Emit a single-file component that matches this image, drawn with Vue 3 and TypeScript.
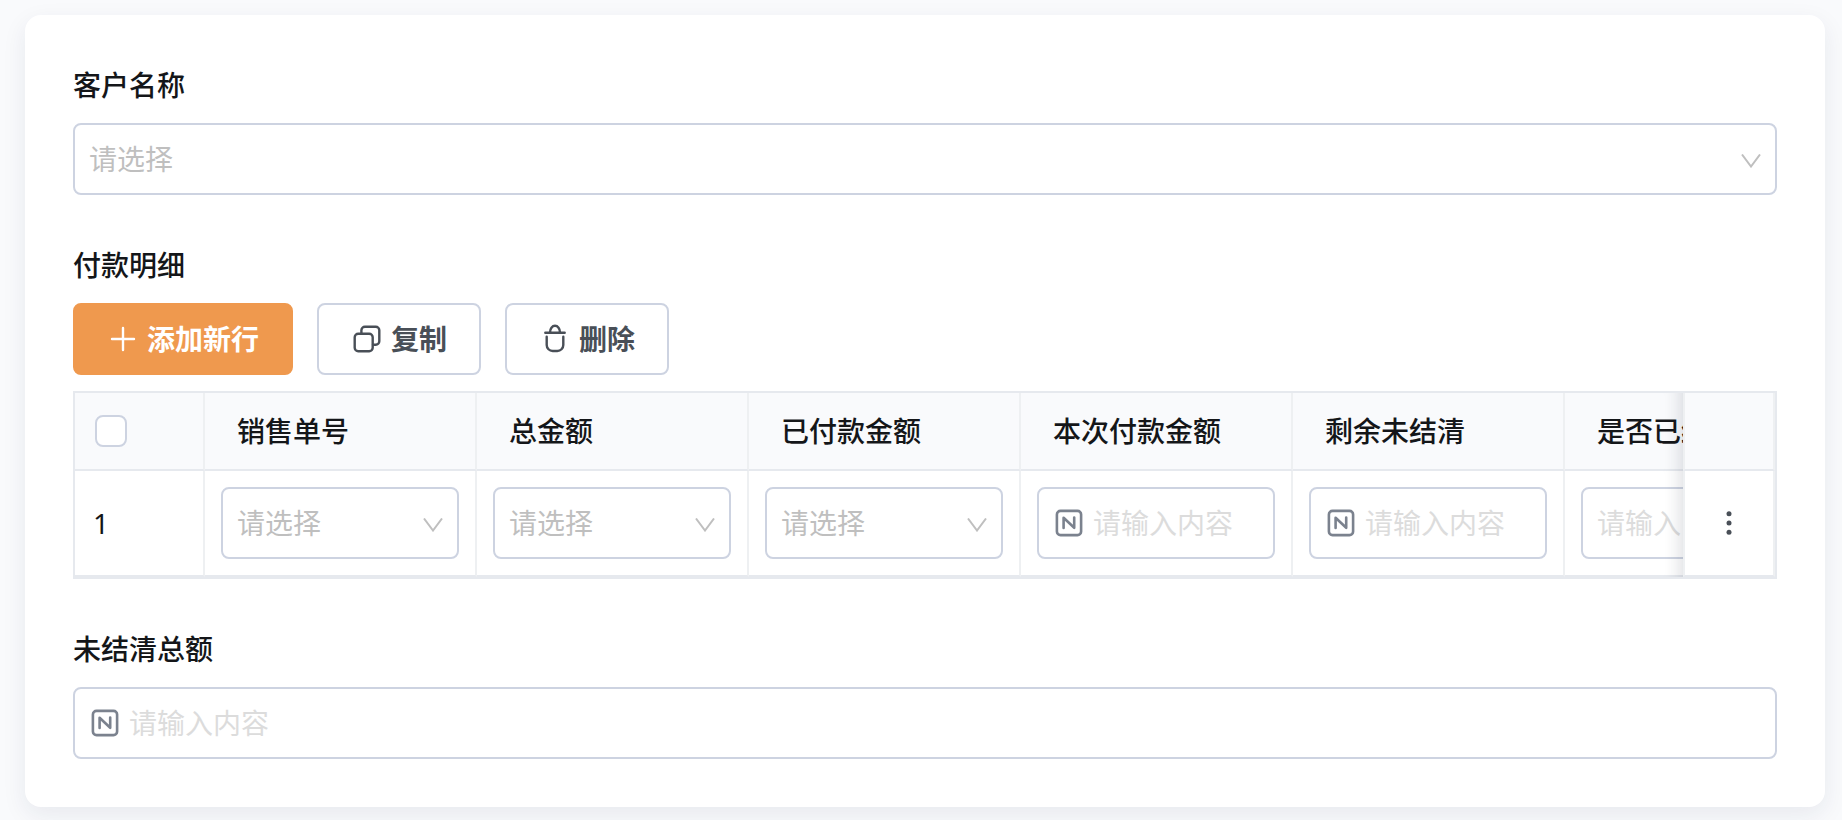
<script setup lang="ts">
import { ref } from 'vue'

type CellKind = 'select' | 'number' | 'text'

interface Column {
  key: string
  title: string
  kind: CellKind
}

const columns: Column[] = [
  { key: 'orderNo', title: '销售单号', kind: 'select' },
  { key: 'total', title: '总金额', kind: 'select' },
  { key: 'paid', title: '已付款金额', kind: 'select' },
  { key: 'current', title: '本次付款金额', kind: 'number' },
  { key: 'rest', title: '剩余未结清', kind: 'number' },
  { key: 'settled', title: '是否已结清', kind: 'text' },
]

const createRow = (): Record<string, string> =>
  Object.fromEntries(columns.map((c) => [c.key, '']))

const customer = ref('')
const outstanding = ref('')
const allChecked = ref(false)
const rows = ref<Record<string, string>[]>([createRow()])

function addRow() {
  rows.value.push(createRow())
}

function copyRow() {
  const last = rows.value[rows.value.length - 1]
  if (last) rows.value.push({ ...last })
}

function removeRow() {
  rows.value.pop()
}
</script>

<template>
  <main class="page">
    <form class="card" @submit.prevent>
      <div class="field">
        <label class="label" for="customer">客户名称</label>
        <div class="control">
          <select id="customer" v-model="customer" class="entry placeholder">
            <option value="" disabled>请选择</option>
          </select>
          <svg class="chevron" viewBox="0 0 20 14" aria-hidden="true">
            <path d="M1 0.5 10 12.5 19 0.5" />
          </svg>
        </div>
      </div>

      <section class="field" aria-labelledby="detail-title">
        <h2 id="detail-title" class="label">付款明细</h2>
        <div class="toolbar">
          <button type="button" class="btn primary" @click="addRow">
            <svg class="icon" viewBox="0 0 32 32" aria-hidden="true">
              <path d="M16 5V27M5 16H27" />
            </svg>
            <span>添加新行</span>
          </button>
          <button type="button" class="btn" @click="copyRow">
            <svg class="icon" viewBox="0 0 32 32" aria-hidden="true">
              <rect x="3.7" y="10.7" width="18" height="17.6" rx="3.5" />
              <path d="M10.4 10.3V7.2A3.5 3.5 0 0 1 13.9 3.7H24.8A3.5 3.5 0 0 1 28.3 7.2V18.2A3.5 3.5 0 0 1 24.8 21.7H22" />
            </svg>
            <span>复制</span>
          </button>
          <button type="button" class="btn" @click="removeRow">
            <svg class="icon" viewBox="0 0 32 32" aria-hidden="true">
              <path d="M6.3 9.8H25.7M11 9.4A5 6.6 0 0 1 21 9.4M7.7 13.8V22A6 6 0 0 0 13.7 28H18.3A6 6 0 0 0 24.3 22V13.8" />
            </svg>
            <span>删除</span>
          </button>
        </div>

        <div class="table-wrap">
          <table class="table">
            <colgroup>
              <col class="col-index" />
              <col v-for="c in columns" :key="c.key" class="col-data" />
              <col class="col-action" />
            </colgroup>
            <thead>
              <tr>
                <th class="index">
                  <input v-model="allChecked" type="checkbox" class="check" aria-label="全选" />
                </th>
                <th v-for="c in columns" :key="c.key" scope="col">{{ c.title }}</th>
                <td class="action"></td>
              </tr>
            </thead>
            <tbody>
              <tr v-for="(row, i) in rows" :key="i">
                <td class="index">{{ i + 1 }}</td>
                <td v-for="c in columns" :key="c.key">
                  <div class="control">
                    <template v-if="c.kind === 'select'">
                      <select v-model="row[c.key]" class="entry placeholder" :aria-label="c.title">
                        <option value="" disabled>请选择</option>
                      </select>
                      <svg class="chevron" viewBox="0 0 20 14" aria-hidden="true">
                        <path d="M1 0.5 10 12.5 19 0.5" />
                      </svg>
                    </template>
                    <template v-else>
                      <svg v-if="c.kind === 'number'" class="num-icon" viewBox="0 0 32 32" aria-hidden="true">
                        <rect x="3.9" y="3.9" width="24.2" height="24.2" rx="3.6" />
                        <path d="M10.6 21V10.8L21.2 20.8V10.6" />
                      </svg>
                      <input v-model="row[c.key]" type="text" class="entry" placeholder="请输入内容" :aria-label="c.title" />
                    </template>
                  </div>
                </td>
                <td class="action">
                  <button type="button" class="more" aria-label="更多">
                    <svg viewBox="0 0 32 32" aria-hidden="true">
                      <circle cx="16" cy="6.7" r="2.5" />
                      <circle cx="16" cy="16" r="2.5" />
                      <circle cx="16" cy="25.3" r="2.5" />
                    </svg>
                  </button>
                </td>
              </tr>
            </tbody>
          </table>
        </div>
      </section>

      <div class="field">
        <label class="label" for="outstanding">未结清总额</label>
        <div class="control">
          <svg class="num-icon" viewBox="0 0 32 32" aria-hidden="true">
            <rect x="3.9" y="3.9" width="24.2" height="24.2" rx="3.6" />
            <path d="M10.6 21V10.8L21.2 20.8V10.6" />
          </svg>
          <input id="outstanding" v-model="outstanding" type="text" class="entry" placeholder="请输入内容" />
        </div>
      </div>
    </form>
  </main>
</template>

<style>
body {
  background: #f9fafc;
}
</style>

<style scoped>
.page {
  box-sizing: border-box;
  min-height: 100vh;
  padding: 15px 17px 13px 25px;
  overflow: hidden;
  background: #f9fafc;
  color: #141619;
  font: 400 28px/44px "Noto Sans", "Noto Sans CJK SC", sans-serif;
}

.card {
  display: flex;
  flex-direction: column;
  gap: 48px;
  padding: 48px;
  border-radius: 16px;
  background: #fff;
  box-shadow: 0 8px 24px rgba(31, 35, 80, 0.08);
}

.field {
  display: flex;
  flex-direction: column;
  gap: 16px;
  min-width: 0;
}

.label {
  margin: 0;
  font-size: 28px;
  font-weight: 500;
  line-height: 44px;
}

.control {
  display: flex;
  align-items: center;
  gap: 8px;
  box-sizing: border-box;
  height: 72px;
  padding: 0 14px;
  border: 2px solid #cdd3e1;
  border-radius: 8px;
  background: #fff;
}

.entry {
  flex: 1;
  min-width: 0;
  width: 100%;
  height: 100%;
  margin: 0;
  padding: 0;
  border: 0;
  outline: 0;
  appearance: none;
  background: transparent;
  color: inherit;
  font: inherit;
}

.entry.placeholder {
  color: #bfbfbf;
}

.entry::placeholder {
  color: #dcdcdc;
  opacity: 1;
}

.chevron {
  flex: none;
  width: 20px;
  height: 14px;
  margin-top: 3px;
  fill: none;
  stroke: #bfbfbf;
  stroke-width: 2;
}

.num-icon {
  flex: none;
  width: 32px;
  height: 32px;
  fill: none;
  stroke: #7b828e;
  stroke-width: 2.6;
  stroke-linecap: round;
  stroke-linejoin: round;
}

.toolbar {
  display: flex;
  gap: 24px;
}

.btn {
  display: flex;
  align-items: center;
  gap: 8px;
  box-sizing: border-box;
  height: 72px;
  padding: 0 32px;
  border: 2px solid #cdd3e1;
  border-radius: 8px;
  background: #fff;
  color: #494f57;
  font: inherit;
  font-weight: 700;
  cursor: pointer;
}

.btn.primary {
  border-color: #ef994e;
  background: #ef994e;
  color: #fff;
}

.icon {
  width: 32px;
  height: 32px;
  fill: none;
  stroke: currentColor;
  stroke-width: 2.4;
  stroke-linecap: round;
  stroke-linejoin: round;
}

.table-wrap {
  overflow-x: auto;
  border: 2px solid #e6e9ee;
  scrollbar-width: none;
}

.table {
  width: 1854px;
  min-width: 100%;
  border-collapse: separate;
  border-spacing: 0;
  table-layout: fixed;
}

.col-index {
  width: 130px;
}

.col-data {
  width: 272px;
}

.col-action {
  width: 92px;
}

.table th,
.table td {
  box-sizing: border-box;
  padding: 16px;
  border-right: 2px solid #eef0f2;
  border-bottom: 2px solid #e6e9ee;
  background: #fff;
  text-align: left;
}

.table thead th,
.table thead td {
  height: 78px;
  padding: 16px 32px;
  background: #f9fafc;
  font-weight: 500;
}

.table .index,
.table thead .index {
  padding: 16px 20px;
}

.table tbody .index {
  padding: 16px 18px;
}

.check {
  display: block;
  box-sizing: border-box;
  width: 32px;
  height: 32px;
  margin: 0;
  border: 2px solid #cdd3e1;
  border-radius: 8px;
  appearance: none;
  background: #fff;
}

.check:checked {
  background: #ef994e;
}

.table .action,
.table thead .action {
  position: sticky;
  right: 0;
  padding: 0;
  border-left: 2px solid #eef0f2;
}

.action::before {
  content: "";
  position: absolute;
  top: 0;
  right: calc(100% + 2px);
  bottom: -2px;
  width: 60px;
  box-shadow: inset -20px 0 16px -16px rgba(31, 35, 60, 0.14);
  pointer-events: none;
}

.more {
  display: block;
  width: 32px;
  height: 32px;
  margin: 0 auto;
  padding: 0;
  border: 0;
  background: none;
  cursor: pointer;
}

.more svg {
  display: block;
  width: 32px;
  height: 32px;
  fill: #494f57;
}
</style>
